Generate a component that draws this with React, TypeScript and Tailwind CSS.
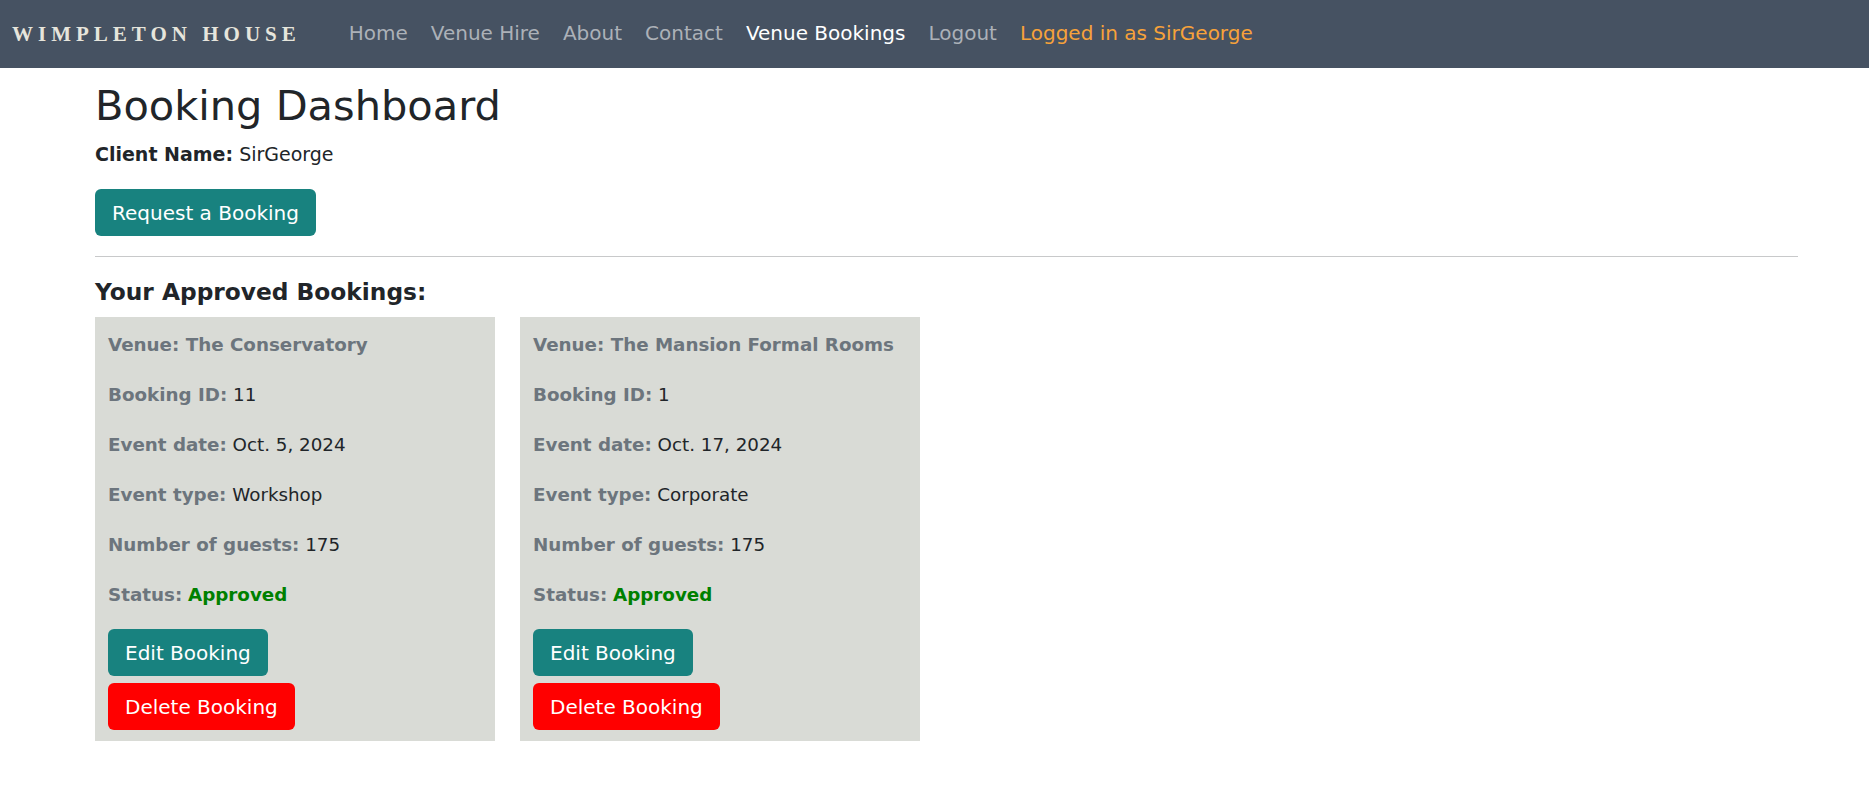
import React from 'react';

const bookings = [
  { venue: 'The Conservatory', id: 11, date: 'Oct. 5, 2024', type: 'Workshop', guests: 175, status: 'Approved' },
  { venue: 'The Mansion Formal Rooms', id: 1, date: 'Oct. 17, 2024', type: 'Corporate', guests: 175, status: 'Approved' },
];

const navLinks = [
  { label: 'Home', active: false },
  { label: 'Venue Hire', active: false },
  { label: 'About', active: false },
  { label: 'Contact', active: false },
  { label: 'Venue Bookings', active: true },
  { label: 'Logout', active: false },
];

const Row: React.FC<{ label: string; children: React.ReactNode; last?: boolean }> = ({ label, children, last }) => (
  <p className={`text-[18.3px] leading-[30px] text-[#212529] ${last ? 'mb-[19px]' : 'mb-[20px]'}`}>
    <span className="font-bold text-[#6c757d]">{label}</span> {children}
  </p>
);

const App: React.FC = () => {
  return (
    <div className="min-h-screen bg-white text-[#212529]" style={{ fontFamily: '"DejaVu Sans", sans-serif' }}>
      {/* Navbar */}
      <nav className="h-[68px] bg-[#465262] flex items-center">
        <a
          className="ml-[12px] text-[21px] font-bold tracking-[5px] text-[#e6e5dc] leading-none"
          style={{ fontFamily: '"Liberation Serif", serif' }}
        >
          WIMPLETON HOUSE
        </a>
        <ul className="flex items-center gap-[23px] ml-[48px] text-[20px] pb-[3px]">
          {navLinks.map((l) => (
            <li key={l.label} className={l.active ? 'text-white' : 'text-[#acb1b8]'}>
              {l.label}
            </li>
          ))}
          <li className="text-[#f7a23a]">Logged in as SirGeorge</li>
        </ul>
      </nav>

      {/* Main */}
      <main className="pl-[95px] pr-[71px]">
        <h1 className="mt-[14px] text-[41.5px] leading-[48px] font-normal">Booking Dashboard</h1>
        <p className="mt-[11px] text-[19px] leading-[27px]">
          <span className="font-bold">Client Name:</span> SirGeorge
        </p>
        <button className="mt-[21px] h-[47px] px-[17px] rounded-[6px] bg-[#18827f] text-white text-[20px] flex items-center">
          Request a Booking
        </button>
        <hr className="mt-[20px] border-t border-[#c8c9ca]" />
        <h4 className="mt-[21px] text-[23.3px] leading-[28px] font-bold">Your Approved Bookings:</h4>

        <div className="mt-[11px] flex gap-[25px]">
          {bookings.map((b) => (
            <div key={b.id} className="w-[400px] bg-[#d9dbd6] pt-[13px] pb-[11px] pl-[13px] pr-[12px]">
              <p className="text-[18.3px] leading-[30px] mb-[20px] font-bold text-[#6c757d]">Venue: {b.venue}</p>
              <Row label="Booking ID:">{b.id}</Row>
              <Row label="Event date:">{b.date}</Row>
              <Row label="Event type:">{b.type}</Row>
              <Row label="Number of guests:">{b.guests}</Row>
              <Row label="Status:" last>
                <span className="font-bold text-[#008000]">{b.status}</span>
              </Row>
              <div className="flex flex-col items-start gap-[7px]">
                <button className="h-[47px] px-[17px] rounded-[6px] bg-[#18827f] text-white text-[20px] flex items-center">
                  Edit Booking
                </button>
                <button className="h-[47px] px-[17px] rounded-[6px] bg-[#ff0000] text-white text-[20px] flex items-center">
                  Delete Booking
                </button>
              </div>
            </div>
          ))}
        </div>
      </main>
    </div>
  );
};

export default App;
